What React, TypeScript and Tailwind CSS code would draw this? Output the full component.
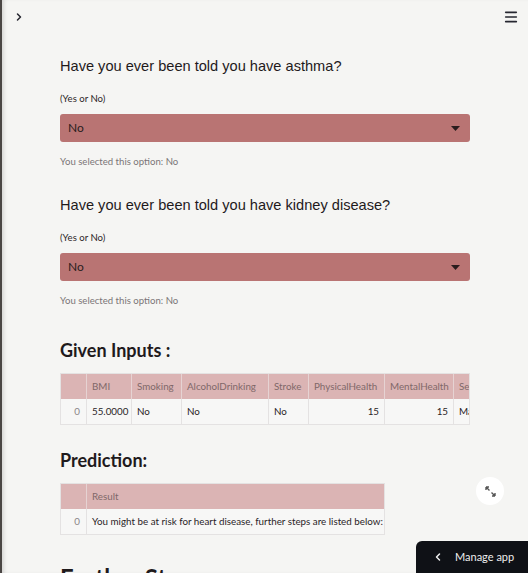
import { ChevronRight, ChevronLeft, Menu } from 'lucide-react'

const inputCols = [
  { name: 'BMI', w: 'w-[45px]', value: '55.0000', right: false },
  { name: 'Smoking', w: 'w-[50px]', value: 'No', right: false },
  { name: 'AlcoholDrinking', w: 'w-[87px]', value: 'No', right: false },
  { name: 'Stroke', w: 'w-[40px]', value: 'No', right: false },
  { name: 'PhysicalHealth', w: 'w-[76px]', value: '15', right: true },
  { name: 'MentalHealth', w: 'w-[69px]', value: '15', right: true },
  { name: 'Sex', w: 'w-[40px]', value: 'Male', right: false },
]

function Question({ text }: { text: string }) {
  return (
    <div className="flex flex-col">
      <h3 className="h-[20px] text-[14.6px] leading-[20px] text-[#1f1a1c] font-['Liberation_Sans',Arial,sans-serif]">
        {text}
      </h3>
      <p className="mt-[16px] h-[14px] text-[9.6px] leading-[14px] text-[#2d2628]">(Yes or No)</p>
      <div className="mt-[8px] flex h-[28px] items-center justify-between rounded-[3px] bg-[#b97473] pl-[8px] pr-[10px]">
        <span className="text-[12px] text-[#2a1d1e]">No</span>
        <svg width="9" height="5" viewBox="0 0 9 5">
          <path d="M0 0h9L4.5 5z" fill="#2a1d1e" />
        </svg>
      </div>
      <p className="mt-[13px] h-[14px] text-[9.6px] leading-[14px] text-[#7b7577]">You selected this option: No</p>
    </div>
  )
}

export default function App() {
  return (
    <div className="relative h-[573px] w-[528px] overflow-hidden border-l-2 border-[#4a4644] bg-[#f5f5f3] font-['Lato','Noto_Sans',sans-serif] shadow-[inset_4px_0_5px_-3px_rgba(0,0,0,0.18)]">
      <div className="flex h-[34px] items-center justify-between pl-[11px] pr-[9px]">
        <ChevronRight className="h-[12px] w-[12px] text-[#262730]" strokeWidth={3} />
        <Menu className="h-[16px] w-[16px] text-[#262730]" strokeWidth={2.4} />
      </div>

      <div className="ml-[58px] w-[410px]">
        <div className="mt-[22px]">
          <Question text="Have you ever been told you have asthma?" />
        </div>
        <div className="mt-[26px]">
          <Question text="Have you ever been told you have kidney disease?" />
        </div>

        <h2 className="mt-[30px] h-[24px] text-[18px] font-bold leading-[24px] text-[#1f1a1c]">Given Inputs :</h2>
        <div className="mt-[11px] overflow-hidden border border-[#e4e2e2] text-[9.8px]">
          <div className="flex h-[25px] w-max bg-[#dbb4b4] text-[#7f6869]">
            <div className="w-[26px] shrink-0 border-r border-[#e6d3d3]" />
            {inputCols.map(c => (
              <div key={c.name} className={`${c.w} flex shrink-0 items-center border-r border-[#e6d3d3] px-[5px]`}>
                {c.name}
              </div>
            ))}
          </div>
          <div className="flex h-[25px] w-max bg-[#f7f7f6] text-[#2a2426]">
            <div className="flex w-[26px] shrink-0 items-center justify-end border-r border-[#e4e2e2] pr-[6px] text-[#8a8587]">0</div>
            {inputCols.map(c => (
              <div
                key={c.name}
                className={`${c.w} flex shrink-0 items-center border-r border-[#e4e2e2] px-[5px] ${c.right ? 'justify-end' : ''}`}
              >
                {c.value}
              </div>
            ))}
          </div>
        </div>

        <h2 className="mt-[23px] h-[24px] text-[18px] font-bold leading-[24px] text-[#1f1a1c]">Prediction:</h2>
        <div className="mt-[11px] w-[325px] border border-[#e4e2e2] text-[9.8px]">
          <div className="flex h-[25px] bg-[#dbb4b4] text-[#7f6869]">
            <div className="w-[26px] shrink-0 border-r border-[#e6d3d3]" />
            <div className="flex items-center px-[5px]">Result</div>
          </div>
          <div className="flex h-[25px] bg-[#f7f7f6] text-[#2a2426]">
            <div className="flex w-[26px] shrink-0 items-center justify-end border-r border-[#e4e2e2] pr-[6px] text-[#8a8587]">0</div>
            <div className="flex items-center whitespace-nowrap px-[5px]">
              You might be at risk for heart disease, further steps are listed below:
            </div>
          </div>
        </div>

        <h2 className="mt-[28px] h-[30px] text-[24px] font-bold leading-[30px] text-[#1f1a1c]">Further Steps</h2>
      </div>

      <button className="absolute left-[474px] top-[477px] flex h-[28px] w-[28px] items-center justify-center rounded-full bg-white">
        <svg width="11" height="11" viewBox="0 0 11 11" fill="none" stroke="#555" strokeWidth="1.4">
          <path d="M1 1l3.5 3.5M1 1h3M1 1v3" />
          <path d="M10 10L6.5 6.5M10 10H7M10 10V7" />
        </svg>
      </button>

      <div className="absolute bottom-0 right-0 flex h-[32px] w-[112px] items-center gap-[11px] rounded-tl-[6px] bg-[#0f1116] pl-[16px] text-[11px] text-[#eeeeee]">
        <ChevronLeft className="h-[12px] w-[12px]" strokeWidth={3} />
        <span>Manage app</span>
      </div>
    </div>
  )
}
